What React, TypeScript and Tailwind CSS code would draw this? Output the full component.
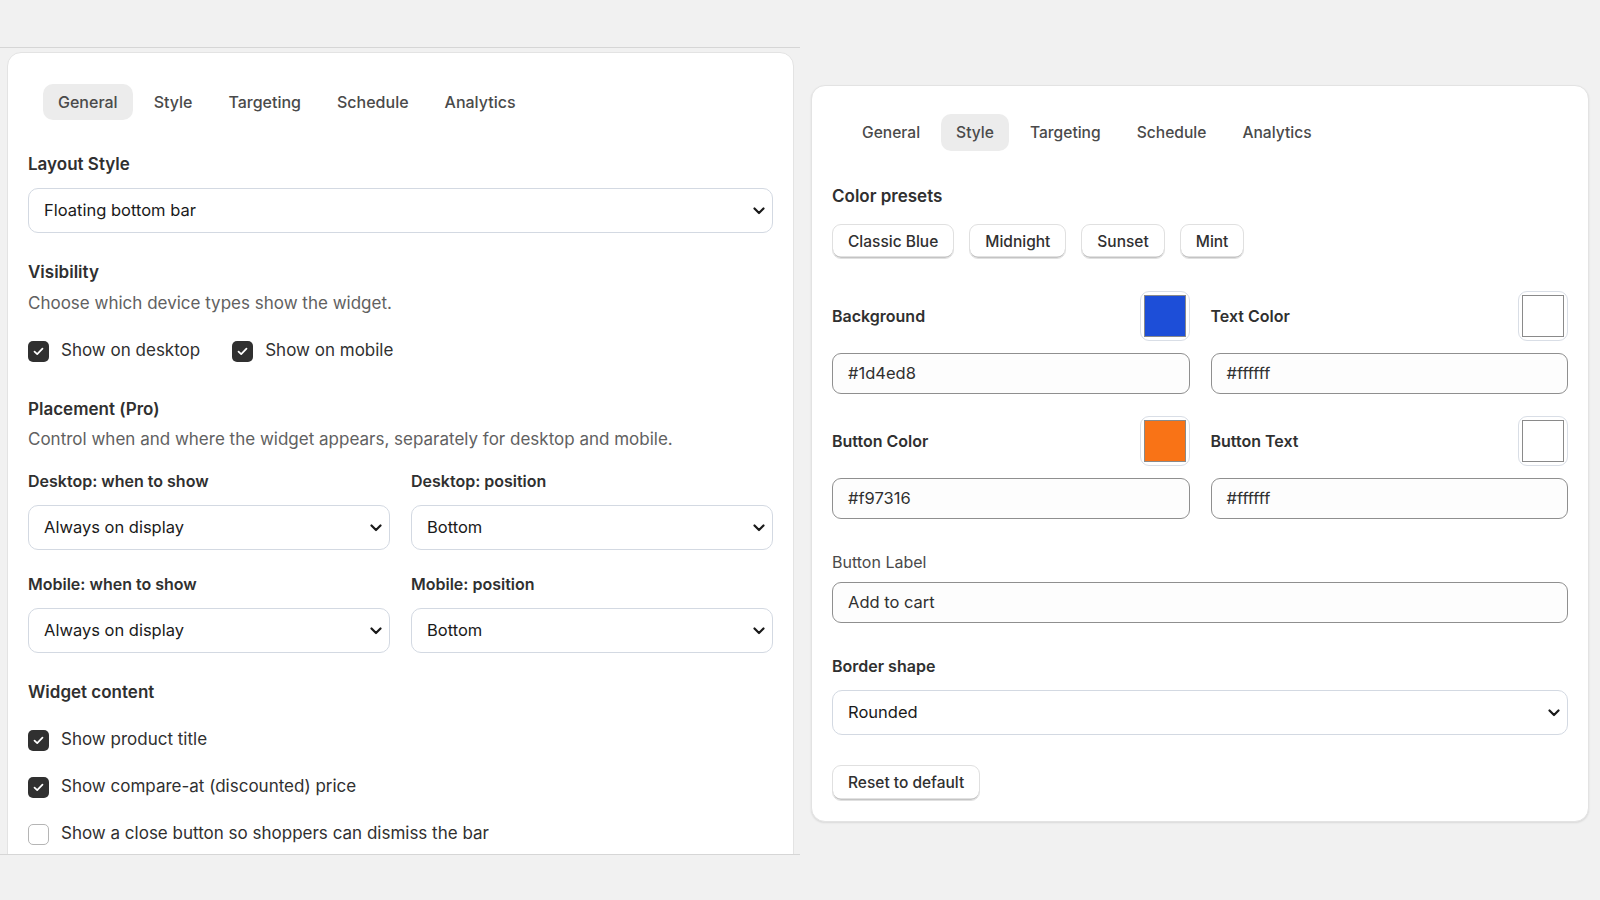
import type { ReactNode } from "react";

const tabs = ["General", "Style", "Targeting", "Schedule", "Analytics"];

function Tabs({ active, h, size }: { active: string; h: string; size: string }) {
  return (
    <div className="flex gap-[6px] ml-[15px]">
      {tabs.map((t) => (
        <div
          key={t}
          className={`${h} ${size} px-[15px] flex items-center rounded-[10px] font-medium text-[#4a4a4a] ${
            t === active ? "bg-[#ececec]" : ""
          }`}
        >
          {t}
        </div>
      ))}
    </div>
  );
}

function Chevron() {
  return (
    <svg width="12" height="8" viewBox="0 0 12 8" className="absolute right-[7px] top-1/2 -translate-y-1/2">
      <path d="M1.5 1.5 6 6l4.5-4.5" fill="none" stroke="#1a1a1a" strokeWidth="2.2" strokeLinecap="round" strokeLinejoin="round" />
    </svg>
  );
}

function Select({ value, className = "" }: { value: string; className?: string }) {
  return (
    <div
      className={`relative h-[45px] rounded-[10px] border border-[#d3d9e2] bg-white flex items-center pl-[15px] text-[16.5px] text-[#1a1a1a] ${className}`}
    >
      {value}
      <Chevron />
    </div>
  );
}

function TextInput({ value, className = "" }: { value: string; className?: string }) {
  return (
    <div
      className={`h-[41px] rounded-[9px] border border-[#8f8f8f] bg-[#fdfdfd] flex items-center pl-[15px] text-[16.5px] text-[#303030] ${className}`}
    >
      {value}
    </div>
  );
}

function Check({ checked, label, className = "" }: { checked: boolean; label: string; className?: string }) {
  return (
    <div className={`flex items-center h-[24px] gap-[12px] ${className}`}>
      {checked ? (
        <span className="w-[21px] h-[21px] rounded-[5px] bg-[#303030] flex items-center justify-center">
          <svg width="11" height="9" viewBox="0 0 11 9">
            <path d="M1.5 4.6 4.2 7.2 9.5 1.6" fill="none" stroke="#fff" strokeWidth="1.7" strokeLinecap="round" strokeLinejoin="round" />
          </svg>
        </span>
      ) : (
        <span className="w-[21px] h-[21px] rounded-[5px] border border-[#b5b5b5] bg-white" />
      )}
      <span className="text-[17px] text-[#303030]">{label}</span>
    </div>
  );
}

function Heading({ children, className = "" }: { children: ReactNode; className?: string }) {
  return <div className={`text-[17px] leading-[24px] font-semibold text-[#303030] ${className}`}>{children}</div>;
}

function Label({ children, className = "" }: { children: ReactNode; className?: string }) {
  return <div className={`text-[16px] leading-[24px] font-semibold text-[#303030] ${className}`}>{children}</div>;
}

function Swatch({ color }: { color: string }) {
  return (
    <div className="w-[50px] h-[50px] rounded-[9px] border border-[#d9dee6] p-[3px] bg-white">
      <div className="w-full h-full border border-[#8a8a8a]" style={{ background: color }} />
    </div>
  );
}

function ColorField({ label, color, value }: { label: string; color: string; value: string }) {
  return (
    <div className="flex flex-col">
      <div className="flex items-center justify-between">
        <Label>{label}</Label>
        <Swatch color={color} />
      </div>
      <TextInput value={value} className="mt-[12px]" />
    </div>
  );
}

function Pill({ children, className = "" }: { children: ReactNode; className?: string }) {
  return (
    <div
      className={`h-[35px] px-[15px] flex items-center rounded-[9px] border border-[#e0e0e0] bg-white shadow-[inset_0_-1.5px_0_#c4c4c4] text-[15.5px] font-medium text-[#303030] ${className}`}
    >
      {children}
    </div>
  );
}

export default function App() {
  return (
    <div
      className="w-[1600px] h-[900px] bg-[#f1f1f1] flex overflow-hidden"
      style={{ fontFamily: "Inter, 'Noto Sans', sans-serif" }}
    >
      {/* left capture */}
      <div className="w-[800px] flex flex-col">
        <div className="h-[47px]" />
        <div className="h-[808px] border-y border-[#d6d6d6] overflow-hidden pt-[4px] pl-[7px] pr-[6px]">
          <div className="h-[900px] rounded-t-[14px] border border-[#e3e3e3] bg-white pt-[31px] px-[20px]">
            <Tabs active="General" h="h-[36px]" size="text-[16px]" />

            <Heading className="mt-[32px]">Layout Style</Heading>
            <Select value="Floating bottom bar" className="mt-[12px]" />

            <Heading className="mt-[27px]">Visibility</Heading>
            <div className="mt-[7px] text-[17px] leading-[24px] text-[#616161]">
              Choose which device types show the widget.
            </div>
            <div className="mt-[24px] flex gap-[32px]">
              <Check checked label="Show on desktop" />
              <Check checked label="Show on mobile" />
            </div>

            <Heading className="mt-[34px]">Placement (Pro)</Heading>
            <div className="mt-[6px] text-[17px] leading-[24px] text-[#616161]">
              Control when and where the widget appears, separately for desktop and mobile.
            </div>

            <div className="mt-[18px] grid grid-cols-2 gap-x-[21px]">
              <div>
                <Label>Desktop: when to show</Label>
                <Select value="Always on display" className="mt-[12px]" />
                <Label className="mt-[22px]">Mobile: when to show</Label>
                <Select value="Always on display" className="mt-[12px]" />
              </div>
              <div>
                <Label>Desktop: position</Label>
                <Select value="Bottom" className="mt-[12px]" />
                <Label className="mt-[22px]">Mobile: position</Label>
                <Select value="Bottom" className="mt-[12px]" />
              </div>
            </div>

            <Heading className="mt-[27px]">Widget content</Heading>
            <Check checked label="Show product title" className="mt-[24px]" />
            <Check checked label="Show compare-at (discounted) price" className="mt-[23px]" />
            <Check checked={false} label="Show a close button so shoppers can dismiss the bar" className="mt-[23px]" />
          </div>
        </div>
      </div>

      {/* right capture */}
      <div className="flex-1 pt-[85px] pl-[11px] pr-[11px]">
        <div className="rounded-[14px] border border-[#e3e3e3] bg-white shadow-[0_1px_2px_rgba(0,0,0,0.1)] pt-[28px] px-[20px] pb-[20px]">
          <Tabs active="Style" h="h-[37px]" size="text-[15.6px]" />

          <Heading className="mt-[33px]">Color presets</Heading>
          <div className="mt-[16px] flex gap-[15px]">
            <Pill>Classic Blue</Pill>
            <Pill>Midnight</Pill>
            <Pill>Sunset</Pill>
            <Pill>Mint</Pill>
          </div>

          <div className="mt-[32px] grid grid-cols-2 gap-x-[21px] gap-y-[22px]">
            <ColorField label="Background" color="#1d4ed8" value="#1d4ed8" />
            <ColorField label="Text Color" color="#ffffff" value="#ffffff" />
            <ColorField label="Button Color" color="#f97316" value="#f97316" />
            <ColorField label="Button Text" color="#ffffff" value="#ffffff" />
          </div>

          <div className="mt-[31px] text-[16px] leading-[24px] text-[#4a4a4a]">Button Label</div>
          <TextInput value="Add to cart" className="mt-[8px]" />

          <Label className="mt-[31px]">Border shape</Label>
          <Select value="Rounded" className="mt-[12px]" />

          <div className="mt-[30px] flex">
            <Pill className="h-[36px]">Reset to default</Pill>
          </div>
        </div>
      </div>
    </div>
  );
}
